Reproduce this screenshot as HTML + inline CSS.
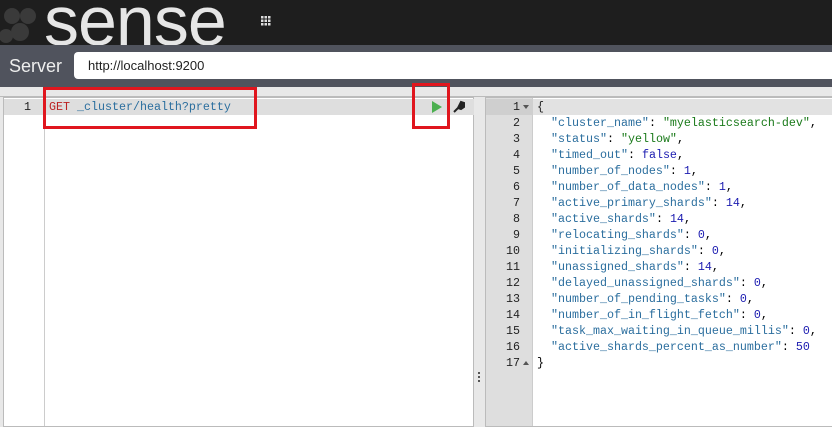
<!DOCTYPE html>
<html><head><style>
*{margin:0;padding:0;box-sizing:border-box}
body{width:832px;height:416px;overflow:hidden;background:#e8e8e8;font-family:"Liberation Sans",sans-serif;position:relative}
.top{position:absolute;left:0;top:0;width:832px;height:45px;background:#1e1e1e;overflow:hidden}
.logo{position:absolute;left:44px;top:-14px;font-size:70px;color:#e6e6e6;font-family:"Liberation Sans",sans-serif;letter-spacing:-1px;line-height:70px}
.srv{position:absolute;left:0;top:45px;width:832px;height:42px;background:#50535d}
.srv span{position:absolute;left:9px;top:11px;color:#eee;font-size:18px}
.inp{position:absolute;left:74px;top:7px;right:0;height:27px;background:#fff;border-radius:4px 0 0 4px;font-size:13px;padding:6px 14px;color:#222}
.ed{position:absolute;background:#fff;border:1px solid #bbb;font-family:"Liberation Mono",monospace;font-size:11.67px}
.gut{position:absolute;left:0;top:0;bottom:0;background:#ebebeb;border-right:1px solid #ccc}
.ln{position:absolute;height:16px;line-height:16px;white-space:pre}
.act{position:absolute;height:16px;background:#dedede}
.k{color:#2b6e9e}.s{color:#1a7a1a}.n{color:#1b1bb0}.p{color:#222}
.red{position:absolute;border:3px solid #e0161e}
</style></head><body>
<div class="top"><svg style="position:absolute;left:0;top:2px" width="40" height="44"><g fill="#3a3a3a"><circle cx="12" cy="14" r="8"/><circle cx="28" cy="14" r="8"/><circle cx="20" cy="30" r="9"/><circle cx="6" cy="34" r="7"/></g></svg><div class="logo">sense</div>
<svg style="position:absolute;left:261px;top:16px" width="10" height="10"><g fill="#ddd"><rect x="0" y="0" width="2.5" height="2.5"/><rect x="3.5" y="0" width="2.5" height="2.5"/><rect x="7" y="0" width="2.5" height="2.5"/><rect x="0" y="3.5" width="2.5" height="2.5"/><rect x="3.5" y="3.5" width="2.5" height="2.5"/><rect x="7" y="3.5" width="2.5" height="2.5"/><rect x="0" y="7" width="2.5" height="2.5"/><rect x="3.5" y="7" width="2.5" height="2.5"/><rect x="7" y="7" width="2.5" height="2.5"/></g></svg></div>
<div class="srv"><span>Server</span><div class="inp">http://localhost:9200</div></div>
<div style="position:absolute;left:0;top:96px;width:832px;height:1px;background:#bbb"></div>
<div class="ed" style="left:3px;top:97px;width:471px;height:330px">
<div class="act" style="left:0;top:1px;width:470px"></div>
<div class="gut" style="width:41px;background:transparent;border-right:1px solid #ccc"></div>
<div class="ln p" style="left:20px;top:1px">1</div>
<div class="ln" style="left:45px;top:1px"><span style="color:#b22">GET</span> <span class="k">_cluster/health?pretty</span></div>
<svg style="position:absolute;left:427px;top:3px" width="12" height="12"><path d="M1 0L11 6L1 12Z" fill="#4caf50"/></svg>
<svg style="position:absolute;left:448px;top:2px" width="13" height="13"><path d="M2 12L7 7M6 8L9 2L12 3L10 5L11 6L12 5L12 7L9 9Z" stroke="#222" stroke-width="2" fill="#222"/></svg>
</div>
<div style="position:absolute;left:475px;top:97px;width:10px;height:319px;background:#e8e8e8"></div>
<div style="position:absolute;left:478px;top:372px;width:2px;height:10px;border-left:2px dotted #555"></div>
<div class="ed" style="left:485px;top:97px;width:350px;height:330px">
<div class="gut" style="width:47px;background:#dedede"></div>
<div class="act" style="left:47px;top:1px;width:300px;background:#e2e2e2"></div>
<div style="position:absolute;left:0;top:1px;width:47px;height:16px;background:#cfcfcf"></div>
<div class="ln p" style="left:51px;top:1px">{<br></div>
<div class="ln" style="left:51px;top:17px;line-height:16px">  <span class="k">"cluster_name"</span>: <span class="s">"myelasticsearch-dev"</span>,
  <span class="k">"status"</span>: <span class="s">"yellow"</span>,
  <span class="k">"timed_out"</span>: <span class="n">false</span>,
  <span class="k">"number_of_nodes"</span>: <span class="n">1</span>,
  <span class="k">"number_of_data_nodes"</span>: <span class="n">1</span>,
  <span class="k">"active_primary_shards"</span>: <span class="n">14</span>,
  <span class="k">"active_shards"</span>: <span class="n">14</span>,
  <span class="k">"relocating_shards"</span>: <span class="n">0</span>,
  <span class="k">"initializing_shards"</span>: <span class="n">0</span>,
  <span class="k">"unassigned_shards"</span>: <span class="n">14</span>,
  <span class="k">"delayed_unassigned_shards"</span>: <span class="n">0</span>,
  <span class="k">"number_of_pending_tasks"</span>: <span class="n">0</span>,
  <span class="k">"number_of_in_flight_fetch"</span>: <span class="n">0</span>,
  <span class="k">"task_max_waiting_in_queue_millis"</span>: <span class="n">0</span>,
  <span class="k">"active_shards_percent_as_number"</span>: <span class="n">50</span>
}</div>
<div class="ln p" style="left:0;width:34px;top:1px;text-align:right;line-height:16px">1
2
3
4
5
6
7
8
9
10
11
12
13
14
15
16
17</div>
<div style="position:absolute;left:37px;top:7px;border:3px solid transparent;border-top:4px solid #555;border-bottom:0"></div>
<div style="position:absolute;left:37px;top:263px;border:3px solid transparent;border-bottom:4px solid #555;border-top:0"></div>
</div>
<div class="red" style="left:43px;top:87px;width:214px;height:42px"></div>
<div class="red" style="left:412px;top:83px;width:38px;height:46px"></div>
</body></html>
